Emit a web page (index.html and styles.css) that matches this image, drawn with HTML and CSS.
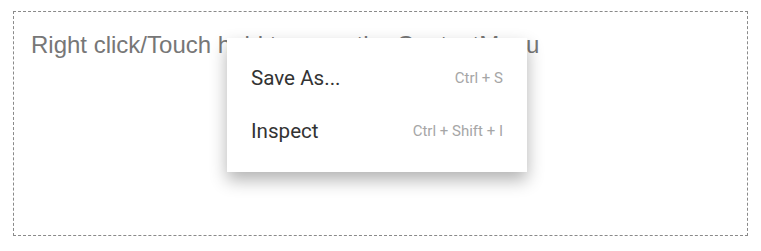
FILE: index.html
```html
<!DOCTYPE html>
<html>
<head>
<meta charset="utf-8">
<link rel="stylesheet" href="styles.css">
</head>
<body>
<div class="area">
  <div class="hint">Right click/Touch hold to open the ContextMenu</div>
  <ul class="menu">
    <li class="item"><span class="label">Save As...</span><span class="key">Ctrl + S</span></li>
    <li class="item"><span class="label">Inspect</span><span class="key">Ctrl + Shift + I</span></li>
  </ul>
</div>
</body>
</html>
```
FILE: styles.css
```css
html, body {
  margin: 0;
  padding: 0;
  background: #fff;
}
.area {
  position: relative;
  box-sizing: border-box;
  margin: 11px 13px 0 13px;
  height: 225px;
  border: 1px dashed #8a8a8a;
  padding: 19px 0 0 17px;
}
.hint {
  font-family: "Liberation Sans", Arial, sans-serif;
  font-size: 24px;
  color: #777;
}
.menu {
  position: absolute;
  left: 213px;
  top: 26px;
  width: 300px;
  margin: 0;
  padding: 13px 0 15px;
  list-style: none;
  background: #fff;
  box-shadow: 0 8px 16px rgba(0, 0, 0, 0.3);
  font-family: Roboto, sans-serif;
}
.item {
  display: flex;
  align-items: center;
  justify-content: space-between;
  height: 53px;
  padding: 0 24px;
}
.label {
  font-size: 20.6px;
  color: #333;
}
.key {
  font-size: 15px;
  color: #a6a6a6;
}
```
